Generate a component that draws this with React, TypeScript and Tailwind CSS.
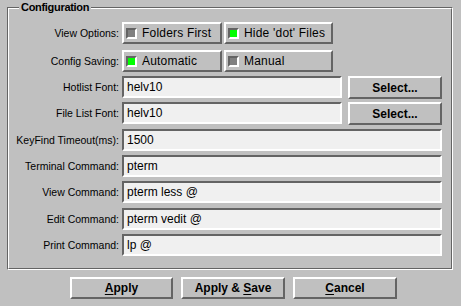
import React from "react";

const raised =
  "border-2 border-t-white border-l-white border-b-[#646464] border-r-[#646464]";
const sunken =
  "border-2 border-t-[#646464] border-l-[#646464] border-b-white border-r-white";

function Label({ children }: { children: React.ReactNode }) {
  return (
    <div className="w-[110px] text-right text-[10.5px] leading-none text-black whitespace-nowrap">
      {children}
    </div>
  );
}

function Check({ label, on, w }: { label: string; on: boolean; w: string }) {
  return (
    <div className={`${raised} ${w} h-[22px] flex items-center bg-[#c0c0c0] shrink-0`}>
      <div
        className={`ml-[2px] w-[11px] h-[11px] border-2 border-t-[#646464] border-l-[#646464] border-b-white border-r-white ${
          on ? "bg-[#00ff00]" : "bg-[#808080]"
        }`}
      />
      <span className="ml-[5px] text-[12px] leading-none text-black tracking-[0.2px]">{label}</span>
    </div>
  );
}

function Entry({ value, w }: { value: string; w: string }) {
  return (
    <div className={`${sunken} ${w} h-[22px] bg-[#f0f0f0] flex items-center pl-[3px] shrink-0`}>
      <span className="text-[12px] leading-none text-black whitespace-nowrap">{value}</span>
    </div>
  );
}

function Btn({ children, w, h = "h-[22px]" }: { children: React.ReactNode; w: string; h?: string }) {
  return (
    <div className={`${raised} ${w} ${h} bg-[#c0c0c0] flex items-center justify-center shrink-0`}>
      <span className="text-[12px] font-bold leading-none text-black">{children}</span>
    </div>
  );
}

export default function App() {
  return (
    <div
      className="w-[461px] h-[306px] bg-[#c0c0c0] pt-[7px] pl-[7px] overflow-hidden"
      style={{ fontFamily: '"Liberation Sans", Arial, sans-serif' }}
    >
      <div className="relative w-[446px] h-[263px] border border-t-[#646464] border-l-[#646464] border-b-white border-r-white">
        <div className="w-full h-full border border-t-white border-l-white border-b-[#646464] border-r-[#646464] flex flex-col">
          <div className="flex items-center mt-[13px]">
            <Label>View Options:</Label>
            <div className="ml-[3px] flex gap-[2px]">
              <Check label="Folders First" on={false} w="w-[100px]" />
              <Check label="Hide 'dot' Files" on={true} w="w-[109px]" />
            </div>
          </div>
          <div className="flex items-center mt-[6px]">
            <Label>Config Saving:</Label>
            <div className="ml-[3px] flex gap-[2px]">
              <Check label="Automatic" on={true} w="w-[100px]" />
              <Check label="Manual" on={false} w="w-[109px]" />
            </div>
          </div>
          <div className="flex items-center mt-[4px] h-[23px]">
            <Label>Hotlist Font:</Label>
            <div className="ml-[3px] flex items-start gap-[6px] h-[23px]">
              <Entry value="helv10" w="w-[220px]" />
              <Btn w="w-[94px]" h="h-[23px]">Select...</Btn>
            </div>
          </div>
          <div className="flex items-center mt-[3px] h-[23px]">
            <Label>File List Font:</Label>
            <div className="ml-[3px] flex items-start gap-[6px] h-[23px]">
              <Entry value="helv10" w="w-[220px]" />
              <Btn w="w-[94px]" h="h-[23px]">Select...</Btn>
            </div>
          </div>
          <div className="flex items-center mt-[4px]">
            <Label>KeyFind Timeout(ms):</Label>
            <div className="ml-[3px]">
              <Entry value="1500" w="w-[320px]" />
            </div>
          </div>
          <div className="flex items-center mt-[4px]">
            <Label>Terminal Command:</Label>
            <div className="ml-[3px]">
              <Entry value="pterm" w="w-[320px]" />
            </div>
          </div>
          <div className="flex items-center mt-[4px]">
            <Label>View Command:</Label>
            <div className="ml-[3px]">
              <Entry value="pterm less @" w="w-[320px]" />
            </div>
          </div>
          <div className="flex items-center mt-[5px]">
            <Label>Edit Command:</Label>
            <div className="ml-[3px]">
              <Entry value="pterm vedit @" w="w-[320px]" />
            </div>
          </div>
          <div className="flex items-center mt-[4px]">
            <Label>Print Command:</Label>
            <div className="ml-[3px]">
              <Entry value="lp @" w="w-[320px]" />
            </div>
          </div>
        </div>
        <div className="absolute left-[11px] top-[-6px] px-[2px] bg-[#c0c0c0] text-[11px] font-bold leading-none text-black tracking-[-0.3px]">
          Configuration
        </div>
      </div>
      <div className="flex ml-[63px] mt-[7px] gap-[8px]">
        <Btn w="w-[103px]">
          <span className="underline underline-offset-2">A</span>pply
        </Btn>
        <Btn w="w-[104px]">
          Apply &amp; <span className="underline underline-offset-2">S</span>ave
        </Btn>
        <Btn w="w-[104px]">
          <span className="underline underline-offset-2">C</span>ancel
        </Btn>
      </div>
    </div>
  );
}
